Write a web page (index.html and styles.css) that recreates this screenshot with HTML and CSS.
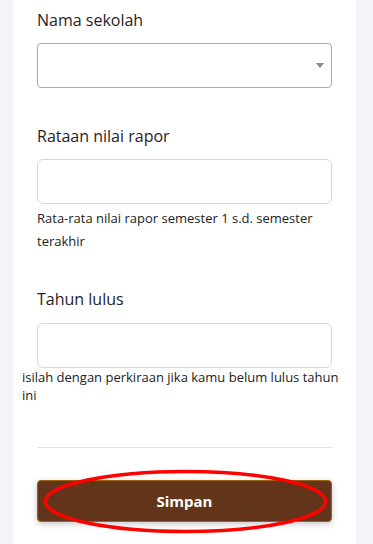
FILE: index.html
```html
<!DOCTYPE html>
<html lang="id">
<head>
<meta charset="utf-8">
<title>Form</title>
<link rel="stylesheet" href="styles.css">
</head>
<body>
<div class="card">
  <div class="field field-1">
    <label class="label">Nama sekolah</label>
    <div class="select">
      <span class="caret"></span>
    </div>
  </div>
  <div class="field field-2">
    <label class="label">Rataan nilai rapor</label>
    <div class="input"></div>
    <p class="hint hint-wide">Rata-rata nilai rapor semester 1 s.d. semester terakhir</p>
  </div>
  <div class="field field-3">
    <label class="label label-3">Tahun lulus</label>
    <div class="input"></div>
    <p class="hint hint-out">isilah dengan perkiraan jika kamu belum lulus tahun ini</p>
  </div>
  <hr class="divider">
  <div class="button-wrap">
    <button class="button">Simpan</button>
    <svg class="annotation" width="291" height="71" viewBox="0 0 291 71">
      <ellipse cx="145.5" cy="35.5" rx="140" ry="30" fill="none" stroke="#ff0000" stroke-width="3.5"/>
    </svg>
  </div>
</div>
</body>
</html>
```
FILE: styles.css
```css
html, body {
  margin: 0;
  padding: 0;
}
body {
  background: #f3f4f9;
  font-family: "Open Sans", "Noto Sans", sans-serif;
  color: #212529;
}
.card {
  margin: 0 17px 0 13px;
  background: #ffffff;
  padding: 8px 24px 22px;
  min-height: 544px;
  box-sizing: border-box;
}
.field-1 { margin-bottom: 36px; }
.field-2 { margin-bottom: 34px; }
.label {
  display: block;
  font-size: 16px;
  line-height: 24px;
  color: #1f2328;
  margin-bottom: 11px;
}
.label-3 { margin-bottom: 12px; }
.select {
  height: 45px;
  box-sizing: border-box;
  border: 1px solid #aaaaaa;
  border-radius: 4px;
  background: #fff;
  display: flex;
  align-items: center;
  justify-content: flex-end;
  padding-right: 7px;
}
.caret {
  width: 0;
  height: 0;
  border-left: 4px solid transparent;
  border-right: 4px solid transparent;
  border-top: 5px solid #888888;
}
.input {
  height: 45px;
  box-sizing: border-box;
  border: 1px solid #d3d6dc;
  border-radius: 6px;
  background: #fff;
}
.hint {
  margin: 0;
  font-size: 13px;
  color: #222;
}
.hint-wide {
  margin-top: 2.5px;
  line-height: 23.4px;
}
.hint-out {
  margin: 1px -16px 0 -15px;
  line-height: 17.7px;
}
.divider {
  margin: 42px 0 0;
  border: 0;
  border-top: 1px solid #e3e3e3;
  height: 0;
}
.button-wrap {
  position: relative;
  margin-top: 32px;
}
.button {
  display: block;
  width: 100%;
  height: 42px;
  box-sizing: border-box;
  background: #62351a;
  border: 1px solid #9a6410;
  border-radius: 4px;
  color: #ffffff;
  font-family: "Open Sans", "Noto Sans", sans-serif;
  font-weight: 700;
  font-size: 15px;
  box-shadow: 0 2px 6px rgba(0, 0, 0, 0.22);
  padding: 0;
}
.annotation {
  position: absolute;
  left: 3px;
  top: -14px;
  pointer-events: none;
}
```
